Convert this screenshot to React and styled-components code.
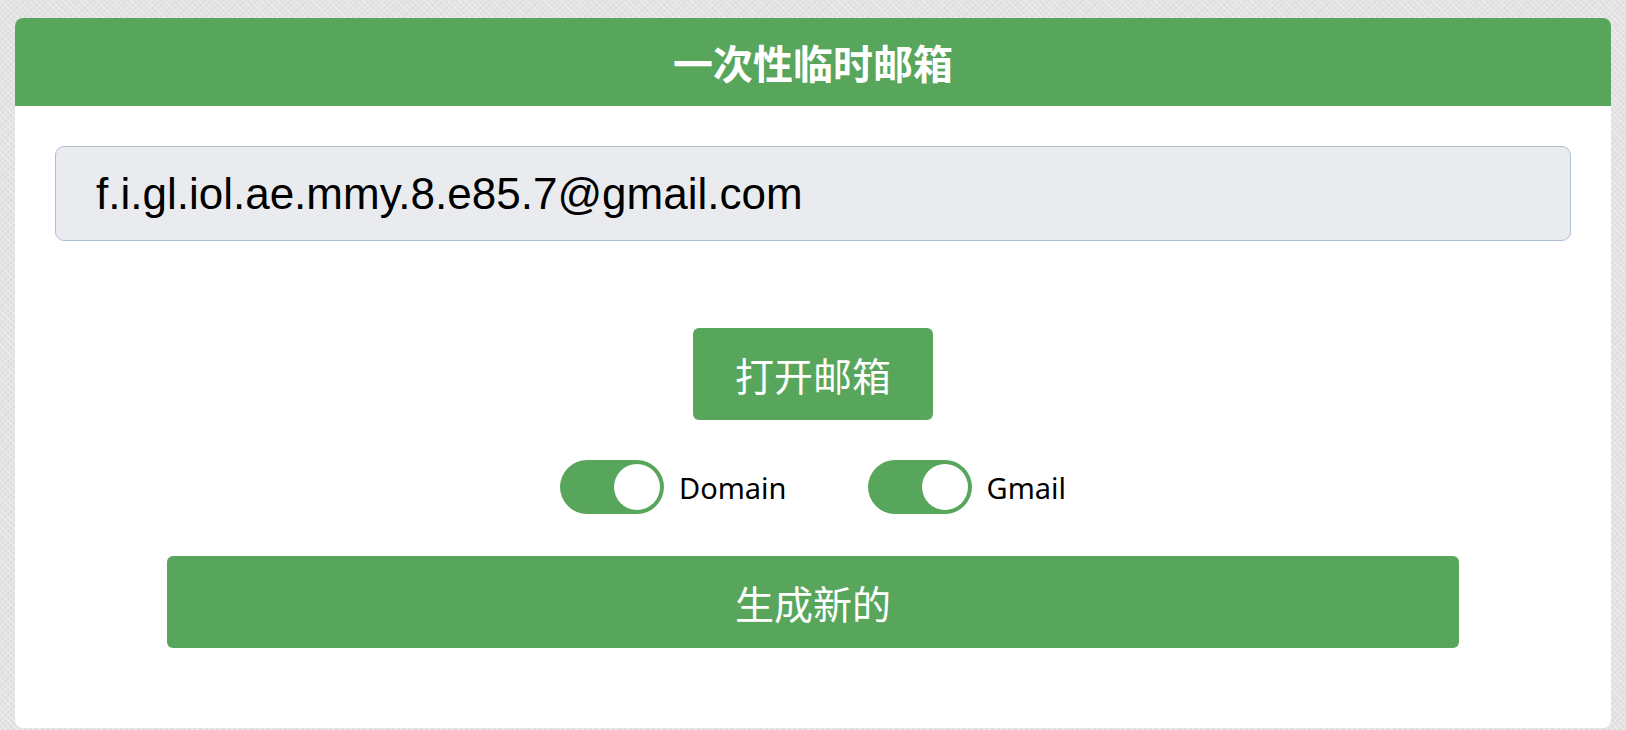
import { useState } from "react";
import styled, { createGlobalStyle } from "styled-components";

const GlobalStyle = createGlobalStyle`
  html, body {
    margin: 0;
    padding: 0;
  }
  body {
    background-color: #e3e3e3;
    background-image:
      repeating-linear-gradient(45deg, rgba(255, 255, 255, 0.35) 0 1px, transparent 1px 4px),
      repeating-linear-gradient(-45deg, rgba(0, 0, 0, 0.03) 0 1px, transparent 1px 4px);
    font-family: "Noto Sans", "Noto Sans CJK SC", sans-serif;
  }
`;

const Page = styled.div`
  padding: 18px 15px 2px 15px;
  box-sizing: border-box;
  height: 730px;
`;

const Card = styled.div`
  background: #fff;
  border-radius: 8px;
  overflow: hidden;
  height: 710px;
  display: flex;
  flex-direction: column;
`;

const Header = styled.div`
  background: #58a65c;
  height: 88px;
  display: flex;
  align-items: center;
  justify-content: center;
  color: #fff;
  font-weight: bold;
  font-size: 40px;
  font-family: "Noto Sans CJK SC", sans-serif;
`;

const Body = styled.div`
  padding: 40px 40px 0 40px;
  display: flex;
  flex-direction: column;
  align-items: center;
`;

const EmailBox = styled.div`
  box-sizing: border-box;
  width: 100%;
  height: 95px;
  background: #e9ebef;
  border: 1.5px solid #b0bfd3;
  border-radius: 9px;
  display: flex;
  align-items: center;
  padding-left: 40px;
  font-family: "Liberation Sans", Arial, sans-serif;
  font-size: 44px;
  color: #000;
`;

const Center = styled.div`
  display: flex;
  flex-direction: column;
  align-items: center;
  margin-top: 87px;
`;

const Button = styled.button`
  border: none;
  background: #58a65c;
  color: #fff;
  border-radius: 6px;
  height: 92px;
  font-family: "Noto Sans CJK SC", sans-serif;
  font-size: ${(p) => (p.$wide ? "39px" : "39px")};
  width: ${(p) => (p.$wide ? "1292px" : "240px")};
  cursor: pointer;
  padding: 0;
`;

const ToggleRow = styled.div`
  display: flex;
  align-items: center;
  gap: 81px;
  margin: 40px 0 42px;
`;

const ToggleItem = styled.label`
  display: flex;
  align-items: center;
  gap: 15px;
  font-size: 29px;
  color: #000;
  cursor: pointer;
`;

const Track = styled.span`
  width: 104px;
  height: 54px;
  border-radius: 27px;
  background: ${(p) => (p.$on ? "#58a65c" : "#ccc")};
  display: flex;
  align-items: center;
  justify-content: ${(p) => (p.$on ? "flex-end" : "flex-start")};
  padding: 0 4px;
  box-sizing: border-box;
`;

const Knob = styled.span`
  width: 46px;
  height: 46px;
  border-radius: 50%;
  background: #fff;
`;

const Toggle = ({ label, on, onClick }) => (
  <ToggleItem onClick={onClick}>
    <Track $on={on}>
      <Knob />
    </Track>
    {label}
  </ToggleItem>
);

const App = () => {
  const [domain, setDomain] = useState(true);
  const [gmail, setGmail] = useState(true);

  return (
    <>
      <GlobalStyle />
      <Page>
        <Card>
          <Header>一次性临时邮箱</Header>
          <Body>
            <EmailBox>f.i.gl.iol.ae.mmy.8.e85.7@gmail.com</EmailBox>
            <Center>
              <Button>打开邮箱</Button>
              <ToggleRow>
                <Toggle label="Domain" on={domain} onClick={() => setDomain(!domain)} />
                <Toggle label="Gmail" on={gmail} onClick={() => setGmail(!gmail)} />
              </ToggleRow>
            </Center>
            <Button $wide>生成新的</Button>
          </Body>
        </Card>
      </Page>
    </>
  );
};

export default App;
